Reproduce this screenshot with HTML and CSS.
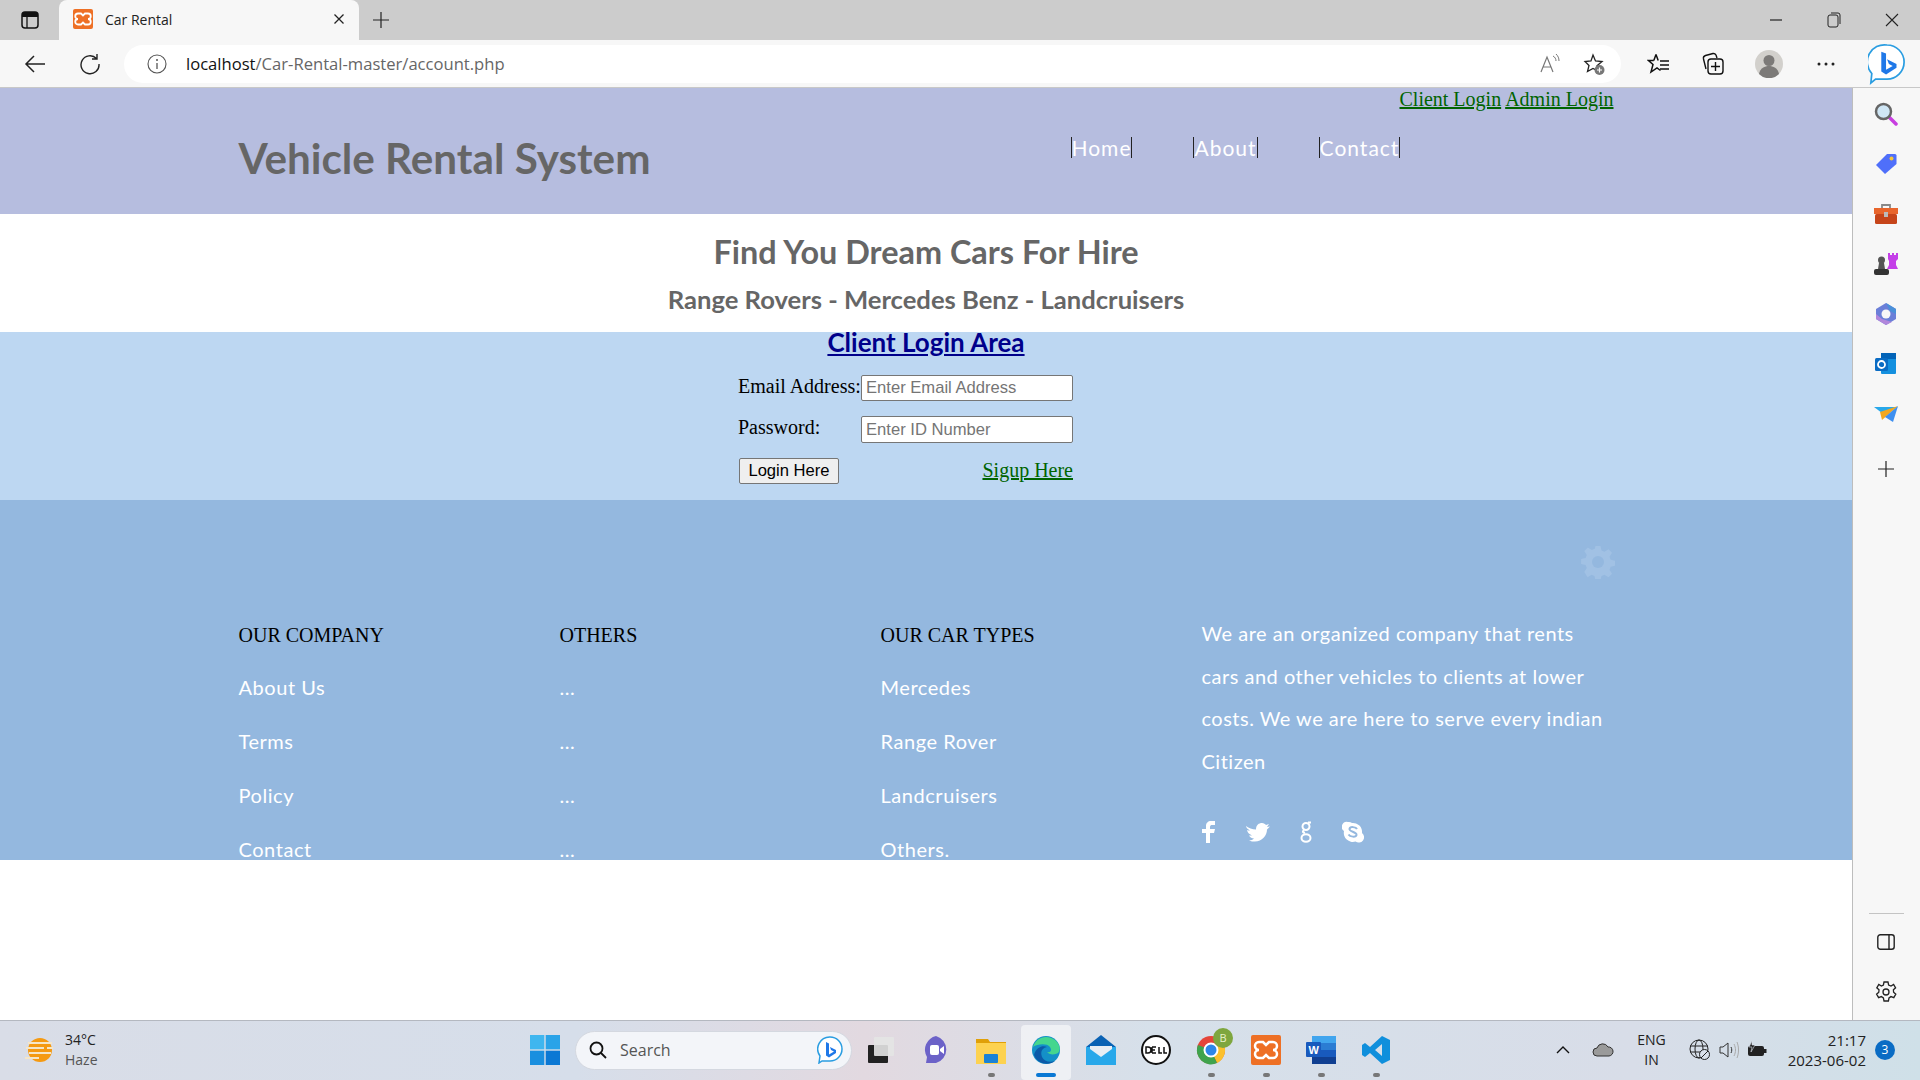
FILE: index.html
```html
<!DOCTYPE html>
<html lang="en">
<head>
    <meta charset="UTF-8">
    <title>Car Rental</title>
    <link rel="stylesheet" href="styles.css">
</head>
<body>
<div class="screen">
    <div class="tabstrip">
        <svg class="tab-actions" width="20" height="20" viewBox="0 0 20 20"><rect x="2" y="2" width="16" height="16" rx="3" fill="none" stroke="#111" stroke-width="1.5"/><path d="M2 5a3 3 0 0 1 3-3h10a3 3 0 0 1 3 3v2H2z" fill="#111"/><path d="M7 7v11" stroke="#111" stroke-width="1.3"/></svg>
        <div class="tab">
            <svg class="favicon" width="20" height="20" viewBox="0 0 20 20"><rect width="20" height="20" rx="2" fill="#ee7025"/><path d="M5 4.500h3l2 2 2-2h3a2.700 2.700 0 0 1 0 5.500a2.700 2.700 0 0 1 0 5.500h-3l-2-2-2 2H5a2.700 2.700 0 0 1 0-5.500a2.700 2.700 0 0 1 0-5.500z" fill="none" stroke="#fff" stroke-width="1.800"/></svg>
            <span class="tab-title">Car Rental</span>
            <svg class="tab-close" width="12" height="12" viewBox="0 0 12 12"><path d="M1.500 1.500l9 9M10.500 1.500l-9 9" stroke="#222" stroke-width="1.300"/></svg>
        </div>
        <svg class="new-tab" width="18" height="18" viewBox="0 0 18 18"><path d="M9 1v16M1 9h16" stroke="#222" stroke-width="1.200"/></svg>
        <div class="window-btns">
            <svg width="14" height="14" viewBox="0 0 14 14"><path d="M1 7h12" stroke="#222" stroke-width="1.200"/></svg>
            <svg width="14" height="16" viewBox="0 0 14 16"><rect x="1" y="3" width="10" height="12" rx="2" fill="none" stroke="#222"/><path d="M4 1h7a2 2 0 0 1 2 2v9" fill="none" stroke="#222"/></svg>
            <svg width="14" height="14" viewBox="0 0 14 14"><path d="M1 1l12 12M13 1L1 13" stroke="#222" stroke-width="1.100"/></svg>
        </div>
    </div>

    <div class="toolbar">
        <svg class="nav-back" width="22" height="20" viewBox="0 0 22 20"><path d="M21 10H2M10 2l-8 8 8 8" fill="none" stroke="#222" stroke-width="1.500"/></svg>
        <svg class="nav-reload" width="22" height="22" viewBox="0 0 22 22"><path d="M17.500 5.500A9 9 0 1 0 20 11M18 1v5h-5" fill="none" stroke="#222" stroke-width="1.400"/></svg>
        <div class="address">
            <svg width="20" height="20" viewBox="0 0 20 20"><circle cx="10" cy="10" r="9" fill="none" stroke="#555" stroke-width="1.100"/><path d="M10 9v6" stroke="#555" stroke-width="1.300"/><circle cx="10" cy="6" r="1" fill="#555"/></svg>
            <span class="url"><b>localhost</b>/Car-Rental-master/account.php</span>
            <svg class="addr-read" width="22" height="22" viewBox="0 0 22 22"><path d="M2 19L8 4l6 15M4.500 14h7" fill="none" stroke="#777" stroke-width="1.200"/><path d="M14 3c2 1 3 3 3 5M17 1c2 2 3 4 3 7" fill="none" stroke="#777"/></svg>
            <svg width="24" height="24" viewBox="0 0 24 24"><path d="M11 3l2.500 6 6.500.5-5 4.200 1 5.300-5-2.500-5.500 3 1.500-6L3 9.500 9 9z" fill="none" stroke="#222" stroke-width="1.300"/><circle cx="17.500" cy="18" r="5" fill="#777"/><path d="M17.500 15.500v5M15 18h5" stroke="#fff" stroke-width="1.200"/></svg>
        </div>
        <div class="toolbar-btns">
            <svg width="24" height="22" viewBox="0 0 24 22"><path d="M9 1.500l2.200 6M6.800 7.500H1.500l4.500 4-2 7.500 6-4 3.500 2.500" fill="none" stroke="#111" stroke-width="1.500"/><path d="M6.800 7.500L9 1.500M13 8h9M13 12h9M13 16h9" fill="none" stroke="#111" stroke-width="1.500"/></svg>
            <svg width="22" height="24" viewBox="0 0 22 24"><rect x="6" y="7" width="15" height="15" rx="3" fill="none" stroke="#111" stroke-width="1.400"/><path d="M4 17L1.500 7a3 3 0 0 1 2-3.500L11 1.500a3 3 0 0 1 3 1.500l1 3M13.500 10v9M9 14.500h9" fill="none" stroke="#111" stroke-width="1.400"/></svg>
            <svg width="28" height="28" viewBox="0 0 28 28"><circle cx="14" cy="14" r="14" fill="#d2d0cc"/><circle cx="14" cy="10.500" r="5.500" fill="#7c7a78"/><path d="M4 24c1-6 6-8 10-8s9 2 10 8a14 14 0 0 1-20 0z" fill="#7c7a78"/></svg>
            <svg class="more-btn" width="18" height="4" viewBox="0 0 18 4"><circle cx="2" cy="2" r="1.500" fill="#222"/><circle cx="9" cy="2" r="1.500" fill="#222"/><circle cx="16" cy="2" r="1.500" fill="#222"/></svg>
        </div>
        <svg class="bing-btn" width="38" height="42" viewBox="0 0 40 44"><path d="M20 2a18 18 0 0 1 0 36H8l-5 4 1-10A18 18 0 0 1 20 2z" fill="#fff" stroke="#2a9de1" stroke-width="1.800"/><path d="M14 9l5 2v17l7-4-4-2-2-5 10 5v4l-11 7-5-3z" fill="#1f78e8"/></svg>
    </div>

    <div class="content">
        <div class="page">
            <header class="site-header">
                <div class="wrap">
                    <div class="top-links">
                        <a href="#">Client Login</a>
                        <a href="#">Admin Login</a>
                    </div>
                    <div class="brand-row">
                        <h1>Vehicle Rental System</h1>
                        <nav class="main-nav">
                            <a href="#">Home</a>
                            <a href="#">About</a>
                            <a href="#">Contact</a>
                        </nav>
                    </div>
                </div>
            </header>

            <section class="hero">
                <h2>Find You Dream Cars For Hire</h2>
                <h3>Range Rovers - Mercedes Benz - Landcruisers</h3>
            </section>

            <section class="login">
                <h4><a href="#">Client Login Area</a></h4>
                <form class="login-form">
                    <label>Email Address:</label>
                    <input class="input-email" type="text" placeholder="Enter Email Address">
                    <label>Password:</label>
                    <input type="text" placeholder="Enter ID Number">
                    <button type="button">Login Here</button>
                    <a href="#">Sigup Here</a>
                </form>
            </section>

            <footer class="site-footer">
                <div class="wrap">
                    <div class="gear-row">
                        <svg width="34" height="34" viewBox="0 0 34 34"><path d="M14.500 1h5l1 4.500 3 1.200 4-2.500 3.500 3.500-2.500 4 1.200 3 4.500 1v5l-4.500 1-1.200 3 2.500 4-3.500 3.500-4-2.500-3 1.200-1 4.500h-5l-1-4.500-3-1.200-4 2.500L3.300 27l2.500-4-1.200-3-4.500-1v-5l4.500-1 1.200-3-2.500-4 3.500-3.500 4 2.500 3-1.200z" fill="#a1c1e4"/><circle cx="17" cy="17" r="6" fill="#94b8df"/></svg>
                    </div>
                    <div class="footer-grid">
                        <div class="footer-col">
                            <h5>OUR COMPANY</h5>
                            <ul>
                                <li>About Us</li>
                                <li>Terms</li>
                                <li>Policy</li>
                                <li>Contact</li>
                            </ul>
                        </div>
                        <div class="footer-col">
                            <h5>OTHERS</h5>
                            <ul>
                                <li>...</li>
                                <li>...</li>
                                <li>...</li>
                                <li>...</li>
                            </ul>
                        </div>
                        <div class="footer-col">
                            <h5>OUR CAR TYPES</h5>
                            <ul>
                                <li>Mercedes</li>
                                <li>Range Rover</li>
                                <li>Landcruisers</li>
                                <li>Others.</li>
                            </ul>
                        </div>
                        <div class="footer-about">
                            <p>We are an organized company that rents cars and other vehicles to clients at lower costs. We we are here to serve every indian Citizen</p>
                            <div class="social">
                                <svg width="14" height="22" viewBox="0 0 14 22"><path d="M4 22V12H0V8h4V5c0-3 2-5 5-5h4v4h-3C9 4 8 4.500 8 6v2h5l-1 4H8v10z" fill="#fff"/></svg>
                                <svg width="24" height="20" viewBox="0 0 24 20"><path d="M0 4c3 2 6 3.500 10 3.500C10 3 13 1 16 1c2 0 3 1 4 2l3-1-2 3 3-.5-3 3c0 6-5 12-12 12-2 0-4 0-6-1 2 0 4-1 5-2-2 0-4-1-5-3h3C3 12 1.500 10.500 1 8c1 .5 1.500.5 3 .5C2 7 0 6 0 4z" fill="#fff"/></svg>
                                <svg width="12" height="22" viewBox="0 0 12 22"><path d="M11 1.500H8M6 2a3.500 3.500 0 1 1 0 7 3.500 3.500 0 0 1 0-7zM4 9.500c-2 1-1 2 1 2.500" fill="none" stroke="#fff" stroke-width="2"/><ellipse cx="6" cy="17" rx="4.500" ry="3.800" fill="none" stroke="#fff" stroke-width="2"/></svg>
                                <svg width="22" height="22" viewBox="0 0 22 22"><path d="M6 1a5 5 0 0 1 4 1 9 9 0 0 1 10 10 5 5 0 0 1-6.500 8.500A9 9 0 0 1 2 10 5 5 0 0 1 6 1z" fill="#fff"/><path d="M15 8c-1-2-7-3-7.500 0-.5 3 7.500 2.500 7 6-.5 2.500-6.500 2-8-.5" fill="none" stroke="#94b8df" stroke-width="2"/></svg>
                            </div>
                        </div>
                    </div>
                </div>
            </footer>
        </div>

        <aside class="sidebar">
            <div class="side-icons">
                <svg width="24" height="24" viewBox="0 0 24 24"><path d="M15 15l7 7" stroke="#c83ee0" stroke-width="3.500" stroke-linecap="round"/><circle cx="9.500" cy="9.500" r="7.500" fill="#cfe6f5" stroke="#666" stroke-width="2.500"/></svg>
                <svg width="22" height="22" viewBox="0 0 22 22"><path d="M1 12L12 1h8a1.500 1.500 0 0 1 1.500 1.500V11L10 21z" fill="#4f6ffa"/><circle cx="16.500" cy="5.500" r="2" fill="#f3c53c"/></svg>
                <svg width="24" height="22" viewBox="0 0 24 22"><path d="M8 6V2h8v4" fill="none" stroke="#888" stroke-width="1.800"/><rect y="5" width="24" height="6" fill="#e8652c"/><rect x="1" y="11" width="22" height="10" rx="1.500" fill="#c6451a"/><rect x="10" y="9" width="4" height="5" fill="#bbb"/></svg>
                <svg width="24" height="24" viewBox="0 0 24 24"><path d="M14 1h2v2h2V1h2v2h2V1h2v6l-2 2v4l2 4H13l2-4V9l-1-2z" fill="#c43fe8"/><circle cx="7.500" cy="8" r="3.500" fill="#555"/><path d="M5 11h5l1 6H4z" fill="#555"/><rect y="17" width="15" height="6" rx="2" fill="#333"/></svg>
                <svg width="22" height="24" viewBox="0 0 22 24"><path d="M11 1l10 6v10l-10 6-10-6V7z" fill="#6b7fd8"/><path d="M11 1l10 6v5l-6-3z" fill="#4a90d9"/><path d="M1 12l0 5 10 6 6-3-10-3z" fill="#b187dc"/><circle cx="11" cy="12" r="4.500" fill="#f7f7f7"/></svg>
                <svg width="22" height="22" viewBox="0 0 22 22"><rect x="6" y="0" width="15" height="21" rx="1" fill="#1490df"/><rect x="6" y="0" width="15" height="6" fill="#0364b8"/><rect y="5" width="13" height="13" rx="1.500" fill="#0a6cc4"/><circle cx="6.500" cy="11.500" r="3.500" fill="none" stroke="#fff" stroke-width="1.800"/></svg>
                <svg width="24" height="18" viewBox="0 0 24 18"><path d="M0 2h24L8 8z" fill="#28a8ea"/><path d="M24 1L6 7l2 8z" fill="#f2a71f"/><path d="M24 1l-5 16-8-5z" fill="#3d8ff0"/></svg>
                <svg class="side-add" width="16" height="16" viewBox="0 0 16 16"><path d="M8 0v16M0 8h16" stroke="#222" stroke-width="1.200"/></svg>
            </div>
            <div class="side-bottom">
                <hr>
                <svg width="18" height="16" viewBox="0 0 18 16"><rect x=".8" y=".8" width="16.400" height="14.400" rx="2.500" fill="none" stroke="#222" stroke-width="1.400"/><path d="M12 1v14" stroke="#222" stroke-width="1.400"/></svg>
                <svg width="22" height="22" viewBox="0 0 22 22"><path d="M9 1h4l.6 3 2.400 1 2.600-1.600 2 3.400-2.200 2 .2 2.400 2.200 2-2 3.400-2.800-1-2 1.400-.6 3H9l-.6-3-2-1.400-2.800 1-2-3.400 2.200-2 .2-2.400L1.800 6.800l2-3.400L6.400 5l2-1z" fill="none" stroke="#222" stroke-width="1.300"/><circle cx="11" cy="11" r="3" fill="none" stroke="#222" stroke-width="1.300"/></svg>
            </div>
        </aside>
    </div>

    <div class="taskbar">
        <div class="weather">
            <svg width="30" height="30" viewBox="0 0 30 30"><circle cx="15" cy="15" r="12" fill="#f59a12"/><path d="M3 8h24M1 13h18M22 13h6M4 18h22M0 23h14" stroke="#f5e6c8" stroke-width="2.200"/></svg>
            <div class="weather-text"><span>34°C</span><span class="muted">Haze</span></div>
        </div>
        <div class="task-center">
            <svg class="win-logo" width="30" height="30" viewBox="0 0 30 30"><rect width="14.300" height="14.300" fill="#3fb6ef"/><rect x="15.700" width="14.300" height="14.300" fill="#2aa3e8"/><rect y="15.700" width="14.300" height="14.300" fill="#1a8fdf"/><rect x="15.700" y="15.700" width="14.300" height="14.300" fill="#0b78d4"/></svg>
            <div class="search">
                <svg width="18" height="18" viewBox="0 0 18 18"><circle cx="7.500" cy="7.500" r="6" fill="none" stroke="#111" stroke-width="1.800"/><path d="M12 12l5 5" stroke="#111" stroke-width="1.800"/></svg>
                <span>Search</span>
                <svg class="search-bing" width="26" height="28" viewBox="0 0 26 28"><path d="M13 1a12 12 0 0 1 0 24H5l-3 2 1-7A12 12 0 0 1 13 1z" fill="#fff" stroke="#2a9de1" stroke-width="1.500"/><path d="M9 6l3 1.500v11l5-3-3-1.500-1-3 6 3v3l-7 4.500-3-2z" fill="#1f78e8"/></svg>
            </div>
            <div class="task-icons">
                <span class="task-item"><svg width="30" height="30" viewBox="0 0 30 30"><rect x="2" y="10" width="20" height="18" rx="1" fill="#222"/><rect x="8" y="2" width="20" height="19" rx="1" fill="#e4e4e4" opacity=".9"/></svg></span>
                <span class="task-item"><svg width="30" height="30" viewBox="0 0 30 30"><path d="M15 1a14 14 0 0 1 0 27H5l1-6A14 14 0 0 1 15 1z" fill="#6c62c8"/><rect x="9" y="10" width="9" height="10" rx="2" fill="#fff"/><path d="M19 14l4-3v8l-4-3z" fill="#fff"/></svg></span>
                <span class="task-item open"><svg width="30" height="30" viewBox="0 0 30 30"><path d="M0 4h12l2 3h16v21H0z" fill="#e0a008"/><rect y="8" width="30" height="21" fill="#fdd250"/><rect x="8" y="19" width="14" height="9" rx="1" fill="#1a82d6"/></svg></span>
                <span class="task-item active"><svg width="30" height="30" viewBox="0 0 30 30"><circle cx="15" cy="15" r="14" fill="#1490c8"/><path d="M2 12C5 2 16-1 24 5c5 4 6 10 3 13-3 2-9 2-11-1 4 1 5-2 3-5-3-4-13-3-17 0z" fill="#45d68e"/><path d="M3 20c2-8 9-10 13-8-5 1-7 5-5 10 2 4 7 6 13 4-6 5-18 3-21-6z" fill="#0c5aa8"/></svg></span>
                <span class="task-item"><svg width="30" height="30" viewBox="0 0 30 30"><path d="M0 12L15 0l15 12v18H0z" fill="#0a62b4"/><rect y="12" width="30" height="18" fill="#28a8ea"/><path d="M4 11h22v3l-11 8-11-8z" fill="#e8eef4"/></svg></span>
                <span class="task-item"><svg width="30" height="30" viewBox="0 0 30 30"><circle cx="15" cy="15" r="14" fill="#fff" stroke="#111" stroke-width="2"/><path d="M5 12v6h2a3 3 0 0 0 0-6zM11 12h4M11 15h3M11 18h4M11 12v6M18 12v6h3M23 12v6h3" fill="none" stroke="#111" stroke-width="1.500"/></svg></span>
                <span class="task-item open"><svg width="30" height="30" viewBox="0 0 30 30"><circle cx="15" cy="15" r="14" fill="#e5453a"/><path d="M15 15L27 8a14 14 0 0 1-6 20z" fill="#fbc02d"/><path d="M15 15L21 28A14 14 0 0 1 2 10z" fill="#3fa34d"/><circle cx="15" cy="15" r="6.500" fill="#2e86e8" stroke="#fff" stroke-width="2"/></svg><b class="profile-badge">B</b></span>
                <span class="task-item open"><svg width="30" height="30" viewBox="0 0 30 30"><rect width="30" height="30" rx="2" fill="#ee7025"/><path d="M8 7h4l3 3 3-3h4a3 3 0 0 1 0 8 3 3 0 0 1 0 8h-4l-3-3-3 3H8a3 3 0 0 1 0-8 3 3 0 0 1 0-8z" fill="none" stroke="#fff" stroke-width="2.500"/></svg></span>
                <span class="task-item open"><svg width="30" height="30" viewBox="0 0 30 30"><rect x="6" y="1" width="24" height="28" rx="1" fill="#2b7cd3"/><rect x="6" y="1" width="24" height="7" fill="#41a5ee"/><rect x="6" y="15" width="24" height="7" fill="#185abd"/><rect x="6" y="22" width="24" height="7" fill="#103f91"/><rect y="7" width="15" height="15" rx="1" fill="#185abd"/><text x="2.500" y="18.500" class="word-w">W</text></svg></span>
                <span class="task-item open"><svg width="30" height="30" viewBox="0 0 30 30"><path d="M21 1l8 4v20l-8 4-12-11-5 4-3-2v-10l3-2 5 4zM21 9l-7 6 7 6z" fill="#0f8fdc" fill-rule="evenodd"/></svg></span>
            </div>
        </div>
        <div class="tray">
            <svg width="14" height="8" viewBox="0 0 14 8"><path d="M1 7l6-6 6 6" fill="none" stroke="#111" stroke-width="1.400"/></svg>
            <svg class="tray-cloud" width="22" height="14" viewBox="0 0 22 14"><path d="M5 13a4 4 0 0 1 0-8 6 6 0 0 1 11-1 4.500 4.500 0 0 1 1 9z" fill="#9a9a9a" stroke="#333"/></svg>
            <div class="lang"><span>ENG</span><span>IN</span></div>
            <svg width="22" height="22" viewBox="0 0 22 22"><circle cx="10" cy="10" r="9" fill="none" stroke="#222"/><ellipse cx="10" cy="10" rx="4" ry="9" fill="none" stroke="#222"/><path d="M1 7h18M1 13h18" stroke="#222"/><circle cx="15.500" cy="15.500" r="5" fill="#d9e0ea" stroke="#222"/><path d="M12 19l7-7" stroke="#222"/></svg>
            <svg width="20" height="18" viewBox="0 0 20 18"><path d="M1 6h3l5-4v14l-5-4H1z" fill="none" stroke="#333"/><path d="M12 6c1 2 1 4 0 6" fill="none" stroke="#333"/><path d="M15 3c2 4 2 8 0 12M18 1c2 5 2 11 0 16" fill="none" stroke="#aaa"/></svg>
            <svg width="20" height="18" viewBox="0 0 20 18"><rect x="1" y="5" width="16" height="10" rx="2" fill="#222"/><rect x="17" y="8" width="2.500" height="4" fill="#222"/><path d="M5 0L2 6h3l-1 5 4-7H5z" fill="#222" stroke="#dce3ec" stroke-width=".6"/></svg>
            <div class="clock"><span>21:17</span><span>2023-06-02</span></div>
            <span class="notif">3</span>
        </div>
    </div>
</div>
</body>
</html>
```

FILE: styles.css
```css
* {
    box-sizing: border-box;
}
html, body {
    margin: 0;
    padding: 0;
}
svg {
    display: block;
    flex: none;
}
.screen {
    display: flex;
    flex-direction: column;
    width: 1920px;
    height: 1080px;
    overflow: hidden;
    font-family: "Open Sans", sans-serif;
    background: #fff;
}

/* browser chrome */
.tabstrip {
    display: flex;
    align-items: center;
    height: 40px;
    padding-left: 20px;
    background: #cccccc;
}
.tab {
    display: flex;
    align-items: center;
    width: 300px;
    height: 40px;
    margin-left: 19px;
    padding: 0 14px 2px 14px;
    background: #f7f7f7;
    border-radius: 8px 8px 0 0;
}
.tab-title {
    flex: 1;
    margin-left: 12px;
    font-size: 14px;
    color: #222;
}
.new-tab {
    margin-left: 13px;
}
.window-btns {
    display: flex;
    align-items: center;
    gap: 44px;
    margin-left: auto;
    padding-right: 21px;
}
.toolbar {
    display: flex;
    align-items: center;
    height: 48px;
    padding-left: 24px;
    background: #f7f7f7;
    border-bottom: 1px solid #c8c8c8;
}
.nav-reload {
    margin-left: 33px;
}
.address {
    display: flex;
    align-items: center;
    width: 1497px;
    height: 38px;
    margin-left: 23px;
    padding: 0 15px 0 23px;
    background: #fff;
    border-radius: 19px;
}
.url {
    flex: 1;
    margin-left: 19px;
    font-size: 16.6px;
    color: #666;
}
.url b {
    font-weight: 400;
    color: #111;
}
.addr-read {
    margin-right: 21px;
}
.toolbar-btns {
    display: flex;
    align-items: center;
    gap: 31px;
    margin-left: 26px;
}
.toolbar-btns .more-btn {
    margin-left: 3px;
}
.bing-btn {
    margin-left: 33px;
}

/* page */
.content {
    display: flex;
    flex: 1;
    min-height: 0;
}
.page {
    flex: 1;
    min-width: 0;
}
.wrap {
    width: 1375px;
    margin: 0 auto;
}
.site-header {
    height: 126px;
    background: #b6bddf;
}
.top-links {
    display: flex;
    justify-content: flex-end;
    gap: 4px;
    font-family: "Liberation Serif", serif;
    font-size: 20px;
    line-height: 23px;
}
.top-links a, .login-form a {
    color: #006400;
}
.brand-row {
    display: flex;
    align-items: flex-start;
}
h1 {
    flex: 0 0 832px;
    margin: 23px 0 0;
    font-family: Lato, sans-serif;
    font-size: 42.2px;
    line-height: 48px;
    font-weight: 700;
    color: #666;
}
.main-nav {
    display: flex;
    gap: 61px;
    margin-top: 26px;
}
.main-nav a {
    font-family: Lato, sans-serif;
    font-size: 21px;
    line-height: 21px;
    letter-spacing: 1px;
    color: #fff;
    text-decoration: none;
    border-left: 1px solid #222;
    border-right: 1px solid #222;
}
.hero {
    height: 118px;
    padding-top: 20px;
    text-align: center;
    font-family: Lato, sans-serif;
    color: #666;
}
.hero h2 {
    margin: 0;
    font-size: 32.4px;
    line-height: 36px;
}
.hero h3 {
    margin: 14px 0 0;
    font-size: 25.6px;
    line-height: 30px;
}
.login {
    height: 168px;
    background: #bdd7f2;
}
.login h4 {
    margin: 0;
    text-align: center;
    font-family: Lato, sans-serif;
    font-size: 26px;
    line-height: 20px;
}
.login h4 a {
    color: #00008b;
}
.login-form {
    display: grid;
    grid-template-columns: 123px 212px;
    row-gap: 15px;
    width: 335px;
    margin: 23px 0 0 738px;
    font-family: "Liberation Serif", serif;
    font-size: 20px;
    align-items: center;
}
.login-form label {
    align-self: start;
    line-height: 22px;
    white-space: nowrap;
}
.login-form input {
    width: 212px;
    height: 27px;
    padding: 1px 4px;
    font-family: "Liberation Sans", sans-serif;
    font-size: 16.6px;
    background: #fff;
    border: 1px solid #767676;
    border-radius: 2px;
}
.login-form .input-email {
    height: 26px;
}
.login-form input::placeholder {
    color: #757575;
}
.login-form button {
    justify-self: start;
    width: 100px;
    height: 26px;
    margin-left: 1px;
    padding: 0;
    font-family: "Liberation Sans", sans-serif;
    font-size: 16.6px;
    color: #000;
    background: #efefef;
    border: 1px solid #767676;
    border-radius: 2px;
}
.login-form a {
    justify-self: end;
    padding-bottom: 2px;
}
.site-footer {
    height: 360px;
    padding-top: 45px;
    overflow: hidden;
    background: #94b8df;
    font-family: Lato, sans-serif;
    color: #fff;
}
.gear-row {
    display: flex;
    justify-content: flex-end;
}
.gear-row svg {
    margin-right: -1px;
}
.footer-grid {
    display: grid;
    grid-template-columns: 321px 321px 321px 1fr;
    margin-top: 33px;
}
.footer-col h5 {
    margin: 11px 0 0;
    font-family: "Liberation Serif", serif;
    font-size: 20px;
    line-height: 24px;
    font-weight: 400;
    color: #000;
}
.footer-col ul {
    margin: 28px 0 0;
    padding: 0;
    list-style: none;
}
.footer-col li {
    margin-bottom: 30px;
    font-size: 20px;
    line-height: 24px;
    letter-spacing: .55px;
}
.footer-about p {
    margin: 0;
    font-size: 20px;
    line-height: 42.5px;
    letter-spacing: .5px;
}
.social {
    display: flex;
    align-items: center;
    gap: 30px;
    margin-top: 39px;
}

/* edge sidebar */
.sidebar {
    display: flex;
    flex-direction: column;
    justify-content: space-between;
    width: 68px;
    background: #f7f7f7;
    border-left: 1px solid #bdbdbd;
}
.side-icons {
    display: flex;
    flex-direction: column;
    align-items: center;
    gap: 26px;
    padding: 14px 1px 0 0;
}
.side-icons svg {
    height: 24px;
}
.side-icons .side-add {
    height: 16px;
    margin-top: 9px;
}
.side-bottom {
    display: flex;
    flex-direction: column;
    align-items: center;
    padding: 0 1px 17px 0;
}
.side-bottom hr {
    width: 35px;
    margin: 0 0 20px;
    border: 0;
    border-top: 1px solid #c4c4c4;
}
.side-bottom svg + svg {
    margin-top: 31px;
}

/* taskbar */
.taskbar {
    display: flex;
    align-items: center;
    height: 60px;
    padding-bottom: 1px;
    background: linear-gradient(90deg, #d9dde7 0%, #d6deea 30%, #e2d9e0 45%, #d6e0ea 60%, #d8dde8 85%, #cfe0e8 100%);
    border-top: 1px solid #b4b8c0;
    font-size: 14px;
    color: #222;
}
.weather {
    display: flex;
    align-items: center;
    gap: 10px;
    width: 530px;
    padding-left: 25px;
}
.weather-text, .lang, .clock {
    display: flex;
    flex-direction: column;
    line-height: 20px;
}
.muted {
    color: #555;
}
.task-center {
    display: flex;
    align-items: center;
}
.search {
    display: flex;
    align-items: center;
    width: 277px;
    height: 39px;
    margin-left: 15px;
    padding: 0 8px 0 13px;
    background: #f3f5f9;
    border: 1px solid #d4d8e0;
    border-radius: 20px;
    font-size: 16px;
    color: #555;
}
.search span {
    flex: 1;
    margin-left: 13px;
}
.task-icons {
    display: flex;
    gap: 25px;
    margin-left: 14px;
}
.task-item {
    position: relative;
    display: block;
    width: 30px;
    height: 30px;
}
.task-item.open::after, .task-item.active::after {
    content: "";
    position: absolute;
    left: 12px;
    bottom: -12px;
    width: 7px;
    height: 4px;
    border-radius: 2px;
    background: #777;
}
.task-item.active::before {
    content: "";
    position: absolute;
    inset: -10px -10px -15px;
    background: rgba(255, 255, 255, .55);
    border-radius: 4px;
}
.task-item.active svg {
    position: relative;
}
.task-item.active::after {
    left: 5px;
    width: 20px;
    background: #0a78d4;
}
.profile-badge {
    position: absolute;
    top: -7px;
    right: -7px;
    width: 20px;
    height: 20px;
    font-size: 11px;
    line-height: 20px;
    font-weight: 400;
    text-align: center;
    color: #e8f0c8;
    background: #7ea63e;
    border-radius: 50%;
}
.word-w {
    font-family: "Liberation Sans", sans-serif;
    font-size: 11px;
    font-weight: 700;
    fill: #fff;
}
.tray {
    display: flex;
    align-items: center;
    margin-left: auto;
    padding-right: 25px;
}
.lang {
    margin: 0 23px;
    text-align: center;
}
.tray svg + svg {
    margin-left: 8px;
}
.tray .tray-cloud {
    margin-left: 22px;
}
.clock {
    margin-left: 21px;
    text-align: right;
    font-size: 15px;
}
.notif {
    width: 20px;
    height: 20px;
    margin-left: 9px;
    font-size: 12px;
    line-height: 20px;
    text-align: center;
    color: #fff;
    background: #0a6cc4;
    border-radius: 50%;
}
```
